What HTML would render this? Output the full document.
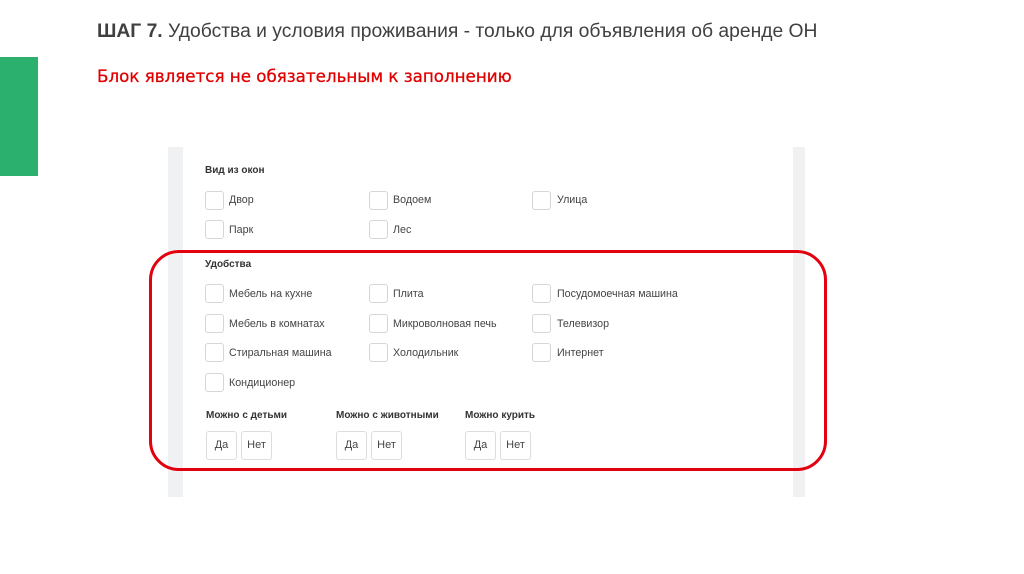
<!DOCTYPE html><html><head><meta charset="utf-8"><style>
body{margin:0;width:1024px;height:574px;background:#fff;position:relative;overflow:hidden;font-family:"Liberation Sans",sans-serif}
.a{position:absolute}
.cb{position:absolute;width:17px;height:17px;border:1px solid #d6d6d6;border-radius:3px;background:#fff}
.lb{position:absolute;font-size:10.7px;color:#444;line-height:14px}
.h{position:absolute;font-size:10px;font-weight:bold;color:#333}
.bt{position:absolute;width:29px;height:27px;border:1px solid #ddd;border-radius:3px;font-size:11px;color:#444;text-align:center;line-height:27px;background:#fff}
</style></head><body>
<div class="a" style="left:0;top:57px;width:38px;height:119px;background:#2bb06e"></div>
<div class="a" style="left:97px;top:21px;font-size:19.3px;color:#404040;white-space:nowrap"><b>ШАГ 7.</b> Удобства и условия проживания - только для объявления об аренде ОН</div>
<div class="a" style="left:97px;top:66px;font-family:'DejaVu Sans',sans-serif;font-size:16.7px;color:#e00000;white-space:nowrap;-webkit-text-stroke:0.3px #e00000">Блок является не обязательным к заполнению</div>
<div class="a" style="left:168px;top:147px;width:15px;height:350px;background:#f0f1f3"></div>
<div class="a" style="left:793px;top:147px;width:12px;height:350px;background:#f0f1f3"></div>
<div class="h" style="left:205px;top:165px">Вид из окон</div>
<div class="h" style="left:205px;top:259px">Удобства</div>
<div class="cb" style="left:205px;top:191px"></div><div class="lb" style="left:229px;top:193px">Двор</div>
<div class="cb" style="left:369px;top:191px"></div><div class="lb" style="left:393px;top:193px">Водоем</div>
<div class="cb" style="left:532px;top:191px"></div><div class="lb" style="left:557px;top:193px">Улица</div>
<div class="cb" style="left:205px;top:220px"></div><div class="lb" style="left:229px;top:223px">Парк</div>
<div class="cb" style="left:369px;top:220px"></div><div class="lb" style="left:393px;top:223px">Лес</div>
<div class="cb" style="left:205px;top:284px"></div><div class="lb" style="left:229px;top:287px">Мебель на кухне</div>
<div class="cb" style="left:369px;top:284px"></div><div class="lb" style="left:393px;top:287px">Плита</div>
<div class="cb" style="left:532px;top:284px"></div><div class="lb" style="left:557px;top:287px">Посудомоечная машина</div>
<div class="cb" style="left:205px;top:314px"></div><div class="lb" style="left:229px;top:317px">Мебель в комнатах</div>
<div class="cb" style="left:369px;top:314px"></div><div class="lb" style="left:393px;top:317px">Микроволновая печь</div>
<div class="cb" style="left:532px;top:314px"></div><div class="lb" style="left:557px;top:317px">Телевизор</div>
<div class="cb" style="left:205px;top:343px"></div><div class="lb" style="left:229px;top:346px">Стиральная машина</div>
<div class="cb" style="left:369px;top:343px"></div><div class="lb" style="left:393px;top:346px">Холодильник</div>
<div class="cb" style="left:532px;top:343px"></div><div class="lb" style="left:557px;top:346px">Интернет</div>
<div class="cb" style="left:205px;top:373px"></div><div class="lb" style="left:229px;top:376px">Кондиционер</div>
<div class="h" style="left:206px;top:410px">Можно с детьми</div>
<div class="h" style="left:336px;top:410px">Можно с животными</div>
<div class="h" style="left:465px;top:410px">Можно курить</div>
<div class="bt" style="left:206px;top:431px">Да</div><div class="bt" style="left:241px;top:431px">Нет</div>
<div class="bt" style="left:336px;top:431px">Да</div><div class="bt" style="left:371px;top:431px">Нет</div>
<div class="bt" style="left:465px;top:431px">Да</div><div class="bt" style="left:500px;top:431px">Нет</div>
<div class="a" style="left:149px;top:250px;width:672px;height:215px;border:3px solid #e3000f;border-radius:30px"></div>
</body></html>
